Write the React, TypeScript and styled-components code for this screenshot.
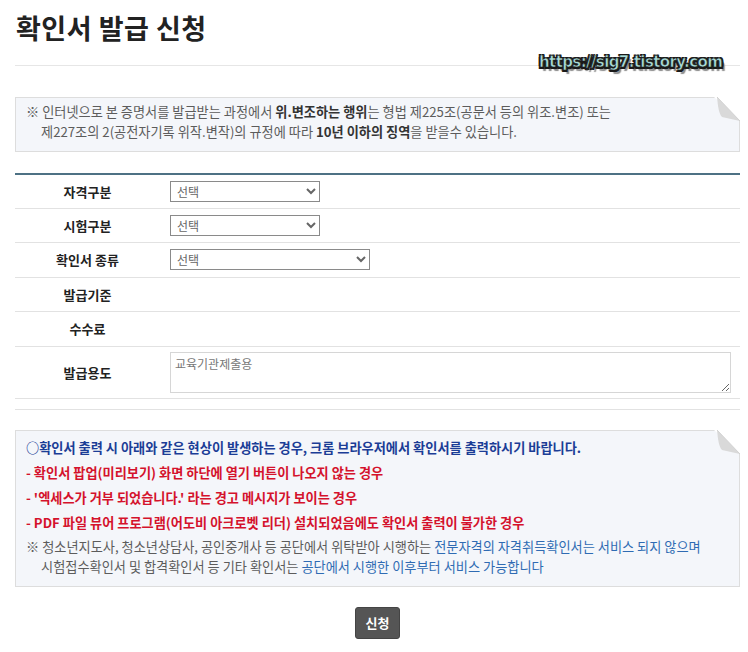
import React from "react"
import styled, { createGlobalStyle } from "styled-components"

const GlobalStyle = createGlobalStyle`
    body {
        margin: 0;
        background: #fff;
        font-family: "Noto Sans CJK KR", "Noto Sans", sans-serif;
        color: #333;
    }
    * { box-sizing: border-box; }
`

const Page = styled.div`
    position: relative;
    padding: 0 8px 0 15px;
    width: 748px;
`

const Title = styled.h1`
    margin: 0;
    padding: 12px 0 21px 1px;
    font-size: 27px;
    line-height: 32px;
    font-weight: 700;
    color: #222;
    letter-spacing: 0.5px;
    border-bottom: 1px solid #e6e6e6;
`

const Watermark = styled.div`
    position: absolute;
    left: 539px;
    top: 53px;
    font-family: "DejaVu Sans", sans-serif;
    font-weight: 700;
    font-size: 15px;
    letter-spacing: -0.6px;
    color: #a9dcd8;
    -webkit-text-stroke: 0.6px #1a1a1a;
    text-shadow:
        -1.5px -1.5px 0 #1a1a1a, 1.5px -1.5px 0 #1a1a1a,
        -1.5px 1.5px 0 #1a1a1a, 1.5px 1.5px 0 #1a1a1a,
        0 1.5px 0 #1a1a1a, 1.5px 0 0 #1a1a1a,
        3px 3.5px 1px #8a8a8a;
`

const NoticeBox = styled.div<{ $top: number }>`
    position: relative;
    margin-top: ${p => p.$top}px;
    background: #f4f6fa;
    border: 1px solid #dddddd;
    padding: 4px 30px 9px 10px;
    font-size: 13.2px;
`

const NoteLine = styled.p`
    margin: 0;
    line-height: 20px;
    padding-left: 15px;
    text-indent: -15px;
    color: #5c5c5c;
    white-space: nowrap;
    b { color: #333; font-weight: 700; }
`

const AlertLine = styled.p<{ $tone: "blue" | "red" }>`
    margin: 0;
    line-height: 25px;
    font-weight: 700;
    white-space: nowrap;
    color: ${p => (p.$tone === "blue" ? "#1b3d96" : "#d4122c")};
`

const GrayNote = styled.div`
    margin-top: 2px;
`

const Link = styled.span`
    color: #2f6bb3;
`

const Corner = styled.svg`
    position: absolute;
    top: -1px;
    right: -1px;
`

const FormTable = styled.table`
    margin-top: 21px;
    width: 100%;
    border-collapse: collapse;
    border-top: 2px solid #4d7184;
`

const Row = styled.tr`
    border-bottom: 1px solid #e2e2e2;
`

const Label = styled.th<{ $h: number }>`
    width: 145px;
    height: ${p => p.$h}px;
    padding: 0;
    font-size: 13px;
    font-weight: 700;
    color: #222;
    text-align: center;
    vertical-align: middle;
`

const Field = styled.td`
    padding: 0 0 0 10px;
    vertical-align: middle;
`

const Select = styled.select<{ $w: number }>`
    width: ${p => p.$w}px;
    height: 21px;
    border: 1px solid #8a8a8a;
    border-radius: 0;
    background: #fff;
    color: #666;
    font-family: "Noto Sans CJK KR", sans-serif;
    font-size: 12px;
    padding: 0 0 0 2px;
    display: block;
`

const Purpose = styled.textarea`
    display: block;
    width: 561px;
    height: 41px;
    border: 1px solid #d6d6d6;
    padding: 2px 4px;
    font-family: "Noto Sans CJK KR", sans-serif;
    font-size: 12px;
    color: #666;
    &::placeholder { color: #777; }
`

const Divider = styled.div`
    margin-top: 10px;
    border-top: 1px solid #e2e2e2;
`

const Actions = styled.div`
    display: flex;
    justify-content: center;
    padding: 20px 0 12px;
`

const SubmitButton = styled.button`
    width: 45px;
    height: 32px;
    border: 1px solid #444;
    border-radius: 3px;
    background: #555;
    color: #fff;
    font-family: "Noto Sans CJK KR", sans-serif;
    font-size: 13px;
    font-weight: 700;
    padding: 0;
`

const DogEar = () => (
    <Corner width="26" height="26" viewBox="0 0 26 26">
        <polygon points="0,0 26,0 26,24" fill="#fff" />
        <path d="M3,0 C4,10 5,17 8,20 L26,24 L3,0 Z" fill="#d9d9d9" />
        <path d="M3,0 L26,24" stroke="#d2d2d2" strokeWidth="1" fill="none" />
    </Corner>
)

const selects = [
    { label: "자격구분", w: 150, h: 34 },
    { label: "시험구분", w: 150, h: 34 },
    { label: "확인서 종류", w: 200, h: 35 },
]

const App: React.FC = () => {
    return <Page>
        <GlobalStyle />
        <Title>확인서 발급 신청</Title>
        <Watermark>https://sig7.tistory.com</Watermark>

        <NoticeBox $top={31}>
            <DogEar />
            <NoteLine>
                ※ 인터넷으로 본 증명서를 발급받는 과정에서 <b>위.변조하는 행위</b>는 형법 제225조(공문서 등의 위조.변조) 또는
                <br />
                제227조의 2(공전자기록 위작.변작)의 규정에 따라 <b>10년 이하의 징역</b>을 받을수 있습니다.
            </NoteLine>
        </NoticeBox>

        <FormTable>
            <tbody>
                {selects.map(s => (
                    <Row key={s.label}>
                        <Label $h={s.h}>{s.label}</Label>
                        <Field>
                            <Select $w={s.w} defaultValue="">
                                <option value="">선택</option>
                            </Select>
                        </Field>
                    </Row>
                ))}
                <Row>
                    <Label $h={34}>발급기준</Label>
                    <Field />
                </Row>
                <Row>
                    <Label $h={35}>수수료</Label>
                    <Field />
                </Row>
                <Row>
                    <Label $h={52}>발급용도</Label>
                    <Field>
                        <Purpose placeholder="교육기관제출용" />
                    </Field>
                </Row>
            </tbody>
        </FormTable>
        <Divider />

        <NoticeBox $top={20}>
            <DogEar />
            <AlertLine $tone="blue">○확인서 출력 시 아래와 같은 현상이 발생하는 경우, 크롬 브라우저에서 확인서를 출력하시기 바랍니다.</AlertLine>
            <AlertLine $tone="red">- 확인서 팝업(미리보기) 화면 하단에 열기 버튼이 나오지 않는 경우</AlertLine>
            <AlertLine $tone="red">- '엑세스가 거부 되었습니다.' 라는 경고 메시지가 보이는 경우</AlertLine>
            <AlertLine $tone="red">- PDF 파일 뷰어 프로그램(어도비 아크로벳 리더) 설치되었음에도 확인서 출력이 불가한 경우</AlertLine>
            <GrayNote>
                <NoteLine>
                    ※ 청소년지도사, 청소년상담사, 공인중개사 등 공단에서 위탁받아 시행하는 <Link>전문자격의 자격취득확인서는 서비스 되지 않으며</Link>
                    <br />
                    시험접수확인서 및 합격확인서 등 기타 확인서는 <Link>공단에서 시행한 이후부터 서비스 가능합니다</Link>
                </NoteLine>
            </GrayNote>
        </NoticeBox>

        <Actions>
            <SubmitButton>신청</SubmitButton>
        </Actions>
    </Page>
}

export default App
